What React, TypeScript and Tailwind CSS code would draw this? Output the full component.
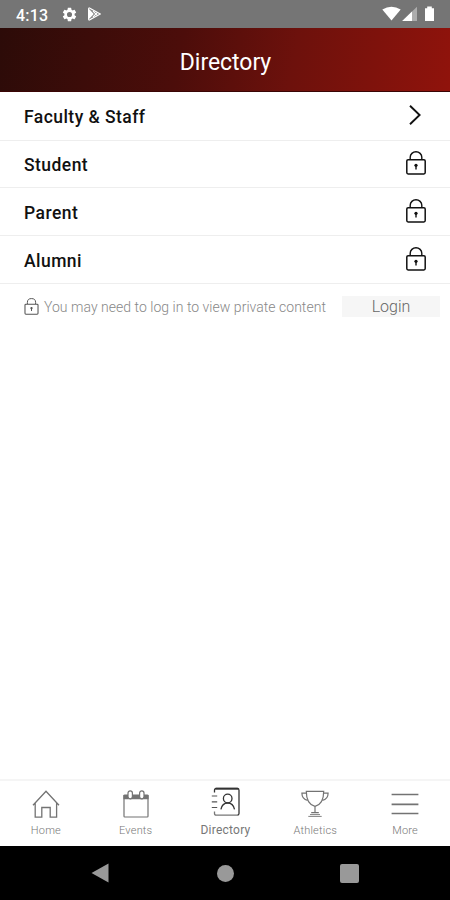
import React from 'react';

interface IconProps {
  className?: string;
}

interface DirectoryRow {
  label: string;
  locked: boolean;
  height: string;
}

interface Tab {
  label: string;
  icon: React.ReactNode;
  active?: boolean;
}

const LockIcon: React.FC<IconProps> = ({ className }) => (
  <svg viewBox="0 0 20 24" fill="none" stroke="currentColor" className={className}>
    <rect x="0.8" y="8.7" width="18.4" height="14.2" rx="1.3" strokeWidth="1.5" />
    <path d="M4.2 8.5V6.2a5.8 5.4 0 0 1 11.6 0v2.3" strokeWidth="1.4" />
    <path d="M10 13.2v5.2" strokeWidth="1.4" />
    <circle cx="10" cy="14.3" r="1.6" fill="currentColor" stroke="none" />
  </svg>
);

const ChevronIcon = () => (
  <svg viewBox="0 0 12 20" fill="none" stroke="#111" strokeWidth="1.9" className="mb-0.5 mr-[5px] h-5 w-3">
    <path d="M1 0.8 10.6 10 1 19.2" />
  </svg>
);

const GearIcon = () => (
  <svg viewBox="0 0 24 24" fill="#fff" className="h-[17px] w-[17px]">
    <path d="M19.14 12.94c.04-.3.06-.61.06-.94 0-.32-.02-.64-.07-.94l2.03-1.58a.49.49 0 0 0 .12-.61l-1.92-3.32a.49.49 0 0 0-.59-.22l-2.39.96c-.5-.38-1.03-.7-1.62-.94l-.36-2.54a.48.48 0 0 0-.48-.41h-3.84c-.24 0-.43.17-.47.41l-.36 2.54c-.59.24-1.13.57-1.62.94l-2.39-.96a.48.48 0 0 0-.59.22L2.74 8.87c-.12.21-.08.47.12.61l2.03 1.58c-.05.3-.09.63-.09.94s.02.64.07.94l-2.03 1.58a.49.49 0 0 0-.12.61l1.92 3.32c.12.22.37.29.59.22l2.39-.96c.5.38 1.03.7 1.62.94l.36 2.54c.05.24.24.41.48.41h3.84c.24 0 .44-.17.47-.41l.36-2.54c.59-.24 1.13-.56 1.62-.94l2.39.96c.22.08.47 0 .59-.22l1.92-3.32a.48.48 0 0 0-.12-.61zM12 15.6A3.6 3.6 0 1 1 12 8.4a3.6 3.6 0 0 1 0 7.2z" />
  </svg>
);

const PlayIcon = () => (
  <svg viewBox="0 0 13 14" fill="#fff" className="h-3.5 w-[13px]">
    <path d="M0 .3v13.4L6.3 7z" />
    <path d="M1 .8 12.3 7 1 13.2" fill="none" stroke="#fff" strokeWidth="1.3" />
    <path d="M5 4 9.3 8.4M5 10l4.3-4.4" stroke="#fff" strokeWidth="1.1" />
    <path d="M1.2 1.8 6 7 1.2 12.2" fill="none" stroke="#888" strokeWidth="0.7" />
  </svg>
);

const StatusBar = () => (
  <div className="flex h-7 shrink-0 items-center bg-[#757575] pl-4 pr-[15px] text-white">
    <span className="w-[45px] pt-[3px] text-[16px] font-medium leading-none tracking-[0.2px]">4:13</span>
    <GearIcon />
    <span className="ml-2.5">
      <PlayIcon />
    </span>
    <svg viewBox="0 0 53 16" className="ml-auto h-4 w-[53px]" fill="#fff">
      <path d="M.3 3.4Q9.5-1.8 18.7 3.4L9.5 14.5z" />
      <path d="M20.2 15 35 .8V15z" opacity="0.4" />
      <path d="M20.2 15 30 5.6V15z" />
      <path d="M43 2.3h2.2V.5h4.6v1.8H52V15h-9z" />
    </svg>
  </div>
);

const HomeIcon = () => (
  <svg viewBox="0 0 28 28" fill="none" stroke="#737373" strokeWidth="1.3" className="h-7 w-7">
    <path d="M1 15.2 14 1.2l13 14M3.2 13.2v14h6.6V17.5h8.4v9.7h6.4v-14" />
  </svg>
);

const EventsIcon = () => (
  <svg viewBox="0 0 28 28" fill="none" stroke="#737373" strokeWidth="1.2" className="h-7 w-7">
    <rect x="2" y="5" width="24" height="22" rx="0.8" />
    <path d="M2 5.5h24v3.2H2z" fill="#737373" />
    <rect x="6" y="0.8" width="4.4" height="8" rx="2.2" fill="#fff" />
    <rect x="17.6" y="0.8" width="4.4" height="8" rx="2.2" fill="#fff" />
  </svg>
);

const DirectoryIcon = () => (
  <svg viewBox="0 0 30 30" fill="none" stroke="#333" strokeWidth="1.3" className="ml-0.5 h-[30px] w-[30px]">
    <path d="M3.5 5.5V3.2Q3.5 1.5 5.2 1.5h21Q28 1.5 28 3.2v23.2q0 1.8-1.8 1.8" />
    <path d="M26.2 28.2h-21q-1.7 0-1.7-1.8v-1.8" stroke="#777" />
    <path d="M4.5 1.7h22.7" strokeWidth="1.8" />
    <path d="M.8 9h5.4M.8 14.8h5.4M.8 20.5h5.4" strokeWidth="1.2" stroke="#555" />
    <circle cx="16.7" cy="11.5" r="4.3" />
    <path d="M9.9 22.4c.8-3.8 3.1-6.4 6.8-6.4s6 2.6 6.8 6.4" />
  </svg>
);

const TrophyIcon = () => (
  <svg viewBox="0 0 28 28" fill="none" stroke="#737373" strokeWidth="1.2" className="h-7 w-7">
    <path d="M5.3 1.3h17.4c0 8.5-3.2 13.7-8.7 15.1C8.5 15 5.3 9.8 5.3 1.3z" />
    <path d="M5.5 3.2H.9c0 3.7 2 6.2 5.8 7.1M22.5 3.2h4.6c0 3.7-2 6.2-5.8 7.1M14 16.4v6M10.2 22.7h7.6" />
    <path d="M9 24.6h10M7.3 26.4h13.4" strokeWidth="0.9" />
  </svg>
);

const MoreIcon = () => (
  <svg viewBox="0 0 28 28" fill="none" stroke="#737373" strokeWidth="1.6" className="h-7 w-7">
    <path d="M.6 4.5h26.8M.6 14.4h26.8M.6 23.5h26.8" />
  </svg>
);

const rows: DirectoryRow[] = [
  { label: 'Faculty & Staff', locked: false, height: 'h-[49px]' },
  { label: 'Student', locked: true, height: 'h-[47px]' },
  { label: 'Parent', locked: true, height: 'h-12' },
  { label: 'Alumni', locked: true, height: 'h-12' },
];

const tabs: Tab[] = [
  { label: 'Home', icon: <HomeIcon /> },
  { label: 'Events', icon: <EventsIcon /> },
  { label: 'Directory', icon: <DirectoryIcon />, active: true },
  { label: 'Athletics', icon: <TrophyIcon /> },
  { label: 'More', icon: <MoreIcon /> },
];

const App: React.FC = () => {
  return (
    <div className="flex h-[900px] w-[450px] flex-col overflow-hidden bg-white font-['Roboto',sans-serif]">
      <StatusBar />

      {/* Header */}
      <header className="flex h-16 shrink-0 items-center justify-center border-b border-[#3a0505] bg-linear-[100deg,#2c0b08,#4c0d0a_40%,#6d110c_65%,#90130c] pl-px pt-[5px]">
        <h1 className="text-[23px] leading-none tracking-[-0.05px] text-white">Directory</h1>
      </header>

      {/* Directory list */}
      <ul className="shrink-0">
        {rows.map((row) => (
          <li
            key={row.label}
            className={`flex ${row.height} items-center justify-between border-b border-[#eeeeee] pl-6 pr-6`}
          >
            <span className="pt-[3px] text-[17.5px] font-medium tracking-[0.45px] text-[#111]">{row.label}</span>
            {row.locked ? <LockIcon className="mb-0.5 h-6 w-5 text-[#111]" /> : <ChevronIcon />}
          </li>
        ))}
      </ul>

      {/* Login hint */}
      <div className="flex h-[46px] shrink-0 items-center pl-6 pr-2.5">
        <LockIcon className="mb-0.5 h-[17px] w-[15px] text-[#555]" />
        <span className="ml-[5px] whitespace-nowrap text-[14px] font-light tracking-[0.03px] text-[#888]">
          You may need to log in to view private content
        </span>
        <button className="mb-px ml-auto h-[21px] w-[98px] bg-[#f6f6f6] pt-px text-[16px] font-light leading-5 text-[#666]">
          Login
        </button>
      </div>

      {/* Tab bar */}
      <nav className="mt-auto grid h-[67px] shrink-0 grid-cols-5 border-t-2 border-[#f5f5f5] pl-px">
        {tabs.map((tab) => (
          <div key={tab.label} className="flex flex-col items-center">
            <div className={tab.active ? 'h-[41px] pt-1.5' : 'h-11 pt-[9px]'}>{tab.icon}</div>
            <span
              className={
                tab.active
                  ? 'pt-0.5 text-[12px] leading-3 tracking-[0.25px] text-[#777]'
                  : 'text-[11px] font-light leading-3 tracking-[0.2px] text-[#777]'
              }
            >
              {tab.label}
            </span>
          </div>
        ))}
      </nav>

      {/* System navigation */}
      <div className="flex h-[54px] shrink-0 items-center justify-between bg-black pl-[91px] pr-[91px]">
        <svg viewBox="0 0 18 20" className="h-5 w-[18px]" fill="#999">
          <path d="M17.5.5v19L.5 10z" />
        </svg>
        <div className="ml-0.5 h-[17px] w-[17px] rounded-full bg-[#999]" />
        <div className="h-[19px] w-[19px] rounded-xs bg-[#999]" />
      </div>
    </div>
  );
};

export default App;
